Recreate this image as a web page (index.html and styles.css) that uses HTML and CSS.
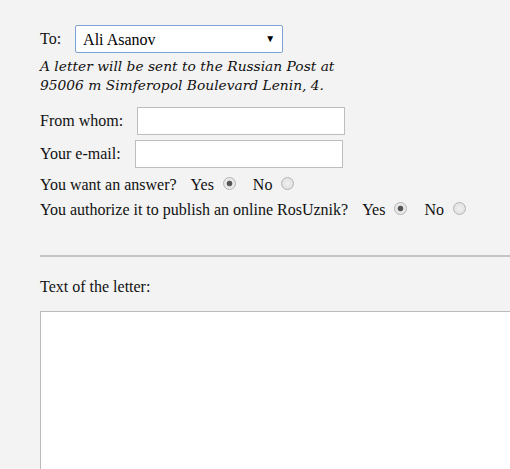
FILE: index.html
```html
<!DOCTYPE html>
<html>
<head>
<meta charset="utf-8">
<link rel="stylesheet" href="styles.css">
</head>
<body>
<form class="letter">
  <div class="row to-row">
    <label class="lbl">To:</label>
    <span class="select-wrap">
      <select class="select"><option>Ali Asanov</option></select>
    </span>
  </div>
  <p class="note">A letter will be sent to the Russian Post at<br>95006 m Simferopol Boulevard Lenin, 4.</p>
  <div class="row from-row">
    <label class="lbl">From whom:</label>
    <input class="field" type="text">
  </div>
  <div class="row mail-row">
    <label class="lbl">Your e-mail:</label>
    <input class="field" type="text">
  </div>
  <div class="row radio-row first">
    <span class="q">You want an answer?</span>
    <label class="opt">Yes <input type="radio" name="ans" class="radio" checked></label>
    <label class="opt">No <input type="radio" name="ans" class="radio"></label>
  </div>
  <div class="row radio-row">
    <span class="q">You authorize it to publish an online RosUznik?</span>
    <label class="opt">Yes <input type="radio" name="pub" class="radio" checked></label>
    <label class="opt">No <input type="radio" name="pub" class="radio"></label>
  </div>
  <hr class="divider">
  <p class="text-label">Text of the letter:</p>
  <textarea class="body-text"></textarea>
</form>
</body>
</html>
```
FILE: styles.css
```css
html { overflow: hidden; }
body {
  margin: 0;
  background: #f3f3f3;
  font-family: "Liberation Serif", "Times New Roman", serif;
  font-size: 16px;
  color: #111;
}
.letter {
  width: 600px;
  padding: 25px 0 0 40px;
}
.row {
  display: flex;
  align-items: center;
}
.to-row { gap: 14px; }
.select-wrap {
  position: relative;
  display: inline-block;
}
.select-wrap::after {
  content: "▼";
  position: absolute;
  right: 8px;
  top: 8px;
  font-size: 10px;
  color: #000;
  pointer-events: none;
}
.select {
  appearance: none;
  -webkit-appearance: none;
  width: 208px;
  height: 28px;
  border: 1px solid #7fa2d4;
  border-radius: 2px;
  background: #fff;
  font-family: "Liberation Serif", serif;
  font-size: 16px;
  padding: 0 0 0 7px;
  color: #000;
}
.note {
  margin: 4px 0 0;
  font-family: "DejaVu Serif", serif;
  font-style: italic;
  font-size: 13.8px;
  line-height: 19px;
  color: #111;
}
.from-row { margin-top: 12px; gap: 14px; }
.mail-row { margin-top: 5px; gap: 14px; }
.field {
  width: 208px;
  height: 28px;
  box-sizing: border-box;
  border: 1px solid #bdbdbd;
  background: #fff;
  margin: 0;
}
.radio-row { height: 25px; }
.radio-row.first { margin-top: 4px; }
.q { margin-right: 14px; }
.opt {
  display: inline-flex;
  align-items: center;
  margin-right: 17px;
}
.radio {
  appearance: none;
  -webkit-appearance: none;
  width: 13px;
  height: 13px;
  margin: 0 0 3px 9px;
  border: 1px solid #b4b4b4;
  border-radius: 50%;
  background: radial-gradient(circle, #f0f0f0 0%, #dcdcdc 100%);
  box-sizing: border-box;
}
.radio:checked {
  background: radial-gradient(circle, #555 0 2.5px, #e8e8e8 3.2px);
}
.divider {
  margin: 33px 0 0;
  border: 0;
  height: 2px;
  background: #c4c4c4;
}
.text-label { margin: 21px 0 0; }
.body-text {
  display: block;
  margin-top: 15px;
  width: 540px;
  height: 300px;
  border: 1px solid #bbb;
  background: #fff;
  resize: none;
}
```
